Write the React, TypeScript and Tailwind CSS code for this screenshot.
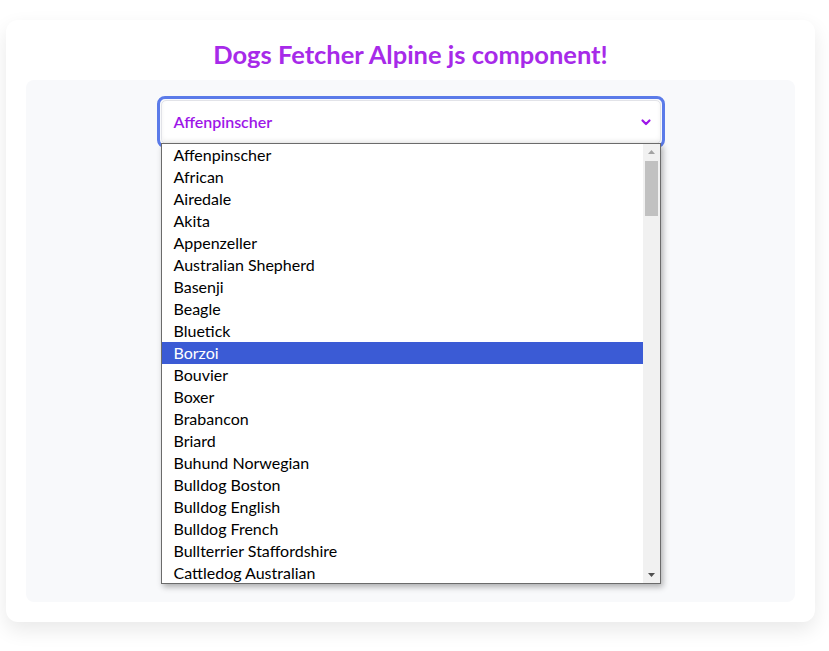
import React from "react";

const breeds = [
  "Affenpinscher",
  "African",
  "Airedale",
  "Akita",
  "Appenzeller",
  "Australian Shepherd",
  "Basenji",
  "Beagle",
  "Bluetick",
  "Borzoi",
  "Bouvier",
  "Boxer",
  "Brabancon",
  "Briard",
  "Buhund Norwegian",
  "Bulldog Boston",
  "Bulldog English",
  "Bulldog French",
  "Bullterrier Staffordshire",
  "Cattledog Australian",
];

const font = { fontFamily: "Lato, 'Open Sans', sans-serif" };

export default function App() {
  return (
    <div className="min-h-[651px] bg-white pt-[20px] px-[6px]" style={font}>
      {/* Card */}
      <div className="w-[809px] h-[602px] bg-white rounded-xl shadow-[0_8px_20px_rgba(0,0,0,0.09)] px-[20px] pt-[18px]">
        <h1 className="text-center text-[25.5px] leading-[32px] font-bold text-[#a72ae9]">
          Dogs Fetcher Alpine js component!
        </h1>

        {/* Panel */}
        <div className="mt-[10px] h-[522px] rounded-lg bg-[#f8f9fb] pt-[16px]">
          <div className="relative mx-auto w-[508px]">
            {/* Select */}
            <div className="rounded-[8px] border-[3px] border-[#5b7be9] p-[1px]">
              <div className="flex h-[44px] items-center justify-between rounded-[5px] border border-[#e2e3e8] bg-white pl-[12px] pr-[8px] shadow-[inset_0_-3px_4px_rgba(0,0,0,0.05)]">
                <span className="text-[16px] font-semibold text-[#9d16e8]">Affenpinscher</span>
                <svg width="12" height="12" viewBox="0 0 12 12">
                  <path d="M2.5 4.5 L6 8 L9.5 4.5" stroke="#9d16e8" strokeWidth="2.2" fill="none" strokeLinecap="round" strokeLinejoin="round" />
                </svg>
              </div>
            </div>

            {/* Dropdown list */}
            <div className="absolute left-[4px] top-[47px] flex h-[441px] w-[500px] border border-[#6b6b6b] bg-white shadow-[2px_3px_6px_rgba(0,0,0,0.3)]">
              <ul className="flex-1">
                {breeds.map((b) => (
                  <li
                    key={b}
                    className={
                      b === "Borzoi"
                        ? "h-[22px] pl-[12px] text-[16px] leading-[22px] bg-[#3b5bd5] text-white"
                        : "h-[22px] pl-[12px] text-[16px] leading-[22px] text-black"
                    }
                  >
                    {b}
                  </li>
                ))}
              </ul>
              {/* Scrollbar */}
              <div className="flex w-[17px] flex-col items-center bg-[#f1f1f1]">
                <svg width="17" height="17" viewBox="0 0 17 17">
                  <path d="M5 10 L8.5 6 L12 10 Z" fill="#a3a3a3" />
                </svg>
                <div className="h-[55px] w-[13px] bg-[#c1c1c1]" />
                <div className="flex-1" />
                <svg width="17" height="17" viewBox="0 0 17 17">
                  <path d="M5 7 L8.5 11 L12 7 Z" fill="#505050" />
                </svg>
              </div>
            </div>
          </div>
        </div>
      </div>
    </div>
  );
}
